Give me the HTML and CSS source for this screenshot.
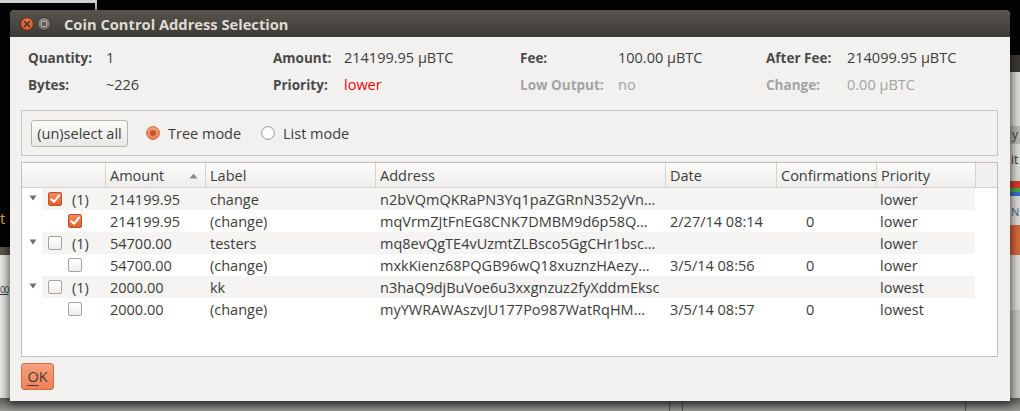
FILE: index.html
```html
<!DOCTYPE html>
<html>
<head>
<meta charset="utf-8">
<title>Coin Control Address Selection</title>
<link rel="stylesheet" href="styles.css">
</head>
<body>
<div class="desktop">
  <div class="bg-topstrip"></div>
  <div class="bg-left"><span class="frag-t">t</span><span class="frag-00">00</span></div>
  <div class="bg-right">
    <div class="r-ay">y</div>
    <div class="r-cit">it</div>
    <div class="r-bars"><i class="b1"></i><i class="b2"></i><i class="b3"></i></div>
    <div class="r-no">N</div>
    <div class="r-orange"></div>
  </div>
  <div class="bg-bottom"><i class="v1"></i><i class="v2"></i><i class="v3"></i></div>

  <div class="window">
    <div class="titlebar">
      <svg class="tb-btn" width="14" height="14" viewBox="0 0 14 14">
        <defs><radialGradient id="cg" cx="50%" cy="40%" r="60%"><stop offset="0" stop-color="#f6875a"/><stop offset="1" stop-color="#d9461a"/></radialGradient></defs>
        <circle cx="7" cy="7" r="6.5" fill="url(#cg)" stroke="#3a2a22" stroke-width="0.8"/>
        <path d="M4.6 4.6 L9.4 9.4 M9.4 4.6 L4.6 9.4" stroke="#3b3630" stroke-width="1.6" stroke-linecap="round"/>
      </svg>
      <svg class="tb-btn" width="14" height="14" viewBox="0 0 14 14">
        <defs><linearGradient id="mg" x1="0" y1="0" x2="0" y2="1"><stop offset="0" stop-color="#8f8b84"/><stop offset="1" stop-color="#65625c"/></linearGradient></defs>
        <circle cx="7" cy="7" r="6.5" fill="url(#mg)" stroke="#2e2d2a" stroke-width="0.8"/>
        <rect x="4.3" y="4.3" width="5.4" height="5.4" rx="1" fill="#5e5b55" stroke="#c9c5be" stroke-width="1"/>
      </svg>
      <span class="title">Coin Control Address Selection</span>
    </div>

    <div class="content">
      <div class="summary">
        <span class="lbl">Quantity:</span><span class="val">1</span>
        <span class="lbl">Amount:</span><span class="val">214199.95 µBTC</span>
        <span class="lbl">Fee:</span><span class="val">100.00 µBTC</span>
        <span class="lbl">After Fee:</span><span class="val">214099.95 µBTC</span>
        <span class="lbl">Bytes:</span><span class="val">~226</span>
        <span class="lbl">Priority:</span><span class="val red">lower</span>
        <span class="lbl dim">Low Output:</span><span class="val dim">no</span>
        <span class="lbl dim">Change:</span><span class="val dim">0.00 µBTC</span>
      </div>

      <div class="group">
        <button class="btn-select">(un)select all</button>
        <label class="radio tree-mode">
          <svg width="14" height="14" viewBox="0 0 14 14">
            <defs><linearGradient id="rg" x1="0" y1="0" x2="0" y2="1"><stop offset="0" stop-color="#f9a07a"/><stop offset="1" stop-color="#ee7d50"/></linearGradient></defs>
            <circle cx="7" cy="7" r="6.4" fill="url(#rg)" stroke="#c9643a" stroke-width="1"/>
            <circle cx="7" cy="7" r="3" fill="#c3552a"/>
          </svg>
          <span>Tree mode</span>
        </label>
        <label class="radio">
          <svg width="14" height="14" viewBox="0 0 14 14">
            <circle cx="7" cy="7" r="6.4" fill="#fdfdfc" stroke="#9b9893" stroke-width="1"/>
          </svg>
          <span>List mode</span>
        </label>
      </div>

      <div class="tree">
        <div class="thead">
          <div class="th c0"></div>
          <div class="th c1">Amount<svg class="sort" width="9" height="6" viewBox="0 0 9 6"><path d="M0.5 5.5 L4.5 0.5 L8.5 5.5 Z" fill="#8a8a88"/></svg></div>
          <div class="th c2">Label</div>
          <div class="th c3">Address</div>
          <div class="th c4">Date</div>
          <div class="th c5">Confirmations</div>
          <div class="th c6">Priority</div>
          <div class="th cf"></div>
        </div>

        <div class="row alt">
          <div class="exp"><svg width="8" height="6" viewBox="0 0 8 6"><path d="M0.5 0.5 L7.5 0.5 L4 5.5 Z" fill="#6f6e6b"/></svg></div>
          <div class="rbody">
            <div class="cell c0p"><span class="cb on"></span><span class="cnt">(1)</span></div>
            <div class="cell c1">214199.95</div>
            <div class="cell c2">change</div>
            <div class="cell c3">n2bVQmQKRaPN3Yq1paZGRnN352yVn…</div>
            <div class="cell c4"></div>
            <div class="cell c5"></div>
            <div class="cell c6">lower</div>
          </div>
        </div>
        <div class="row">
          <div class="exp"></div>
          <div class="rbody">
            <div class="cell c0c"><span class="cb on"></span></div>
            <div class="cell c1">214199.95</div>
            <div class="cell c2">(change)</div>
            <div class="cell c3">mqVrmZJtFnEG8CNK7DMBM9d6p58Q…</div>
            <div class="cell c4">2/27/14 08:14</div>
            <div class="cell c5">0</div>
            <div class="cell c6">lower</div>
          </div>
        </div>
        <div class="row alt">
          <div class="exp"><svg width="8" height="6" viewBox="0 0 8 6"><path d="M0.5 0.5 L7.5 0.5 L4 5.5 Z" fill="#6f6e6b"/></svg></div>
          <div class="rbody">
            <div class="cell c0p"><span class="cb"></span><span class="cnt">(1)</span></div>
            <div class="cell c1">54700.00</div>
            <div class="cell c2">testers</div>
            <div class="cell c3">mq8evQgTE4vUzmtZLBsco5GgCHr1bsc…</div>
            <div class="cell c4"></div>
            <div class="cell c5"></div>
            <div class="cell c6">lower</div>
          </div>
        </div>
        <div class="row">
          <div class="exp"></div>
          <div class="rbody">
            <div class="cell c0c"><span class="cb"></span></div>
            <div class="cell c1">54700.00</div>
            <div class="cell c2">(change)</div>
            <div class="cell c3">mxkKienz68PQGB96wQ18xuznzHAezy…</div>
            <div class="cell c4">3/5/14 08:56</div>
            <div class="cell c5">0</div>
            <div class="cell c6">lower</div>
          </div>
        </div>
        <div class="row alt">
          <div class="exp"><svg width="8" height="6" viewBox="0 0 8 6"><path d="M0.5 0.5 L7.5 0.5 L4 5.5 Z" fill="#6f6e6b"/></svg></div>
          <div class="rbody">
            <div class="cell c0p"><span class="cb"></span><span class="cnt">(1)</span></div>
            <div class="cell c1">2000.00</div>
            <div class="cell c2">kk</div>
            <div class="cell c3">n3haQ9djBuVoe6u3xxgnzuz2fyXddmEksc</div>
            <div class="cell c4"></div>
            <div class="cell c5"></div>
            <div class="cell c6">lowest</div>
          </div>
        </div>
        <div class="row">
          <div class="exp"></div>
          <div class="rbody">
            <div class="cell c0c"><span class="cb"></span></div>
            <div class="cell c1">2000.00</div>
            <div class="cell c2">(change)</div>
            <div class="cell c3">myYWRAWAszvJU177Po987WatRqHM…</div>
            <div class="cell c4">3/5/14 08:57</div>
            <div class="cell c5">0</div>
            <div class="cell c6">lowest</div>
          </div>
        </div>
      </div>

      <div class="footer">
        <button class="btn-ok"><u>O</u>K</button>
      </div>
    </div>
  </div>
</div>
</body>
</html>
```

FILE: styles.css
```css
* { box-sizing: border-box; }

body {
  margin: 0;
  width: 1020px;
  height: 411px;
  overflow: hidden;
  background: #030303;
  font-family: "Open Sans", "Noto Sans", sans-serif;
  font-size: 14.5px;
  color: #3c3c3c;
}

.desktop {
  position: relative;
  width: 1020px;
  height: 411px;
  overflow: hidden;
  background: #030303;
}

/* ---- desktop fragments behind the dialog ---- */
.bg-topstrip {
  position: absolute;
  left: 0; top: 0;
  width: 97px; height: 10px;
  border-top: 3px solid #d6d4d0;
  border-right: 2px solid #c9c7c3;
}
.bg-left {
  position: absolute;
  left: 0; top: 200px;
  width: 12px; height: 211px;
  background: linear-gradient(#030303 0, #030303 47px, #5b554b 47px, #5b554b 55px, #e6e5e2 55px);
}
.frag-t {
  position: absolute;
  left: 0; top: 9px;
  color: #e49a45;
  font-size: 15px;
  line-height: 18px;
}
.frag-00 {
  position: absolute;
  left: 0; top: 84px;
  font-size: 9px;
  letter-spacing: -1px;
  line-height: 12px;
  color: #333;
  text-decoration: underline;
}
.bg-right {
  position: absolute;
  left: 1008px; top: 0;
  width: 12px; height: 411px;
  background: linear-gradient(#030303 0, #030303 55px, #3b3a36 55px, #3b3a36 72px, #dcdad6 72px, #dcdad6 310px, #c8c6c2 310px);
}
.r-ay { position: absolute; left: 2px; top: 126px; width: 10px; height: 18px; font-size: 12px; color: #444; line-height: 18px; background: #b9b7b2; padding-left: 2px; }
.r-cit { position: absolute; left: 3px; top: 152px; font-size: 12px; color: #333; line-height: 16px; }
.r-bars { position: absolute; left: 2px; top: 181px; width: 10px; display: flex; flex-direction: column; }
.r-bars i { display: block; height: 4px; }
.r-bars .b1 { background: #d23a2a; height: 7px; }
.r-bars .b2 { background: #4ba846; }
.r-bars .b3 { background: #3a6fc8; }
.r-no { position: absolute; left: 3px; top: 204px; font-size: 11px; color: #3a5a8a; line-height: 16px; }
.r-orange { position: absolute; left: 2px; top: 225px; width: 10px; height: 30px; background: #d9673e; }

.bg-bottom {
  position: absolute;
  left: 0; top: 398px;
  width: 1020px; height: 13px;
  background: linear-gradient(#5e5d5b, #9b9996);
}
.bg-bottom i { position: absolute; top: 0; width: 1px; height: 13px; background: #555351; }
.bg-bottom .v1 { left: 669px; }
.bg-bottom .v2 { left: 682px; }
.bg-bottom .v3 { left: 965px; }

/* ---- dialog window ---- */
.window {
  position: absolute;
  left: 10px; top: 10px;
  width: 1000px; height: 391px;
  background: #f2f1f0;
  border-radius: 5px 5px 0 0;
  box-shadow: 0 2px 9px 2px rgba(0, 0, 0, 0.6);
  display: flex;
  flex-direction: column;
}

.titlebar {
  flex: none;
  height: 27px;
  border-radius: 5px 5px 0 0;
  background: linear-gradient(#58544d, #3c3b37);
  display: flex;
  align-items: center;
  padding-left: 10px;
}
.tb-btn { display: block; margin-right: 3px; }
.title {
  margin-left: 10px;
  color: #dfdbd2;
  font-weight: bold;
  font-size: 14.7px;
  line-height: 18px;
}

.content {
  flex: 1;
  display: flex;
  flex-direction: column;
  padding: 11px 12px 11px 11px;
}

.summary {
  display: grid;
  grid-template-columns: 78px 167px 71px 176px 98px 148px 81px 1fr;
  row-gap: 7px;
  line-height: 20px;
  padding-left: 7px;
  margin-bottom: 15px;
  white-space: nowrap;
}
.lbl { font-weight: bold; font-size: 13.5px; color: #4a4a4a; }
.val { color: #3c3c3c; }
.red { color: #f40000; }
.dim { color: #a3a3a3; }

.group {
  flex: none;
  height: 46px;
  border: 1px solid #c8c5c0;
  display: flex;
  align-items: center;
  padding: 0 9px;
  margin-bottom: 6px;
}
.btn-select {
  width: 97px;
  height: 27px;
  padding: 0;
  font: inherit;
  color: #3c3c3c;
  border: 1px solid #b7b3ad;
  border-radius: 3px;
  background: linear-gradient(#fbfbfa, #e9e8e6);
  margin-right: 18px;
  white-space: nowrap;
}
.radio {
  display: flex;
  align-items: center;
  gap: 8px;
  white-space: nowrap;
}
.radio svg { display: block; }
.tree-mode { width: 115px; }

.tree {
  flex: none;
  height: 195px;
  border: 1px solid #c2bfba;
  background: #fff;
  margin-bottom: 6px;
  overflow: hidden;
}
.thead {
  display: flex;
  height: 25px;
  border-bottom: 1px solid #d5d2ce;
  background: linear-gradient(#fbfbfa, #efeeec);
  line-height: 24px;
}
.th {
  flex: none;
  padding-left: 4px;
  padding-top: 1px;
  border-left: 1px solid #d6d3cf;
  white-space: nowrap;
  overflow: hidden;
  position: relative;
}
.th.c0 { border-left: none; }
.th.cf { background: #efefee; }
.sort { position: absolute; left: 83px; top: 10px; }

.c0, .c0p, .c0c { width: 83px; }
.c1 { width: 100px; }
.c2 { width: 170px; }
.c3 { width: 290px; }
.c4 { width: 111px; }
.c5 { width: 100px; }
.c6 { width: 99px; }
.cf { width: 22px; }

.row {
  display: flex;
  height: 22px;
  line-height: 22px;
}
.exp {
  flex: none;
  width: 20px;
  display: flex;
  justify-content: flex-end;
  padding-right: 5px;
  padding-top: 7px;
}
.exp svg { display: block; }
.rbody {
  flex: none;
  width: 933px;
  display: flex;
}
.row.alt .rbody { background: #f5f4f3; }
.cell {
  flex: none;
  padding-left: 5px;
  padding-top: 1px;
  white-space: nowrap;
  overflow: hidden;
}
.rbody .c0p { width: 63px; padding-left: 6px; padding-top: 0; display: flex; align-items: center; }
.rbody .c0c { width: 63px; padding-left: 26px; padding-top: 0; display: flex; align-items: center; }
.rbody .c5 { padding-left: 30px; }
.rbody .c6 { padding-left: 4px; }
.cnt { margin-left: 10px; padding-top: 1px; }

.cb {
  flex: none;
  display: block;
  width: 14px;
  height: 14px;
  border: 1px solid #a6a39e;
  border-radius: 2px;
  background: linear-gradient(#ffffff, #efeeec);
}
.cb.on {
  border-color: #b9532a;
  background:
    url("data:image/svg+xml,%3Csvg xmlns='http://www.w3.org/2000/svg' width='12' height='12' viewBox='0 0 12 12'%3E%3Cpath d='M2.3 6.2 L5 8.8 L10 2.6' fill='none' stroke='%23ffffff' stroke-width='2' stroke-linecap='round' stroke-linejoin='round'/%3E%3C/svg%3E") center/12px 12px no-repeat,
    linear-gradient(#f58c5f, #e0612f);
}

.footer { display: flex; }
.btn-ok {
  width: 33px;
  height: 27px;
  padding: 0;
  font: inherit;
  color: #3c3c3c;
  border: 1px solid #cf6f49;
  border-radius: 3px;
  background: linear-gradient(#f8a17d, #ef8056);
}
.btn-ok u { text-underline-offset: 3px; }
```
